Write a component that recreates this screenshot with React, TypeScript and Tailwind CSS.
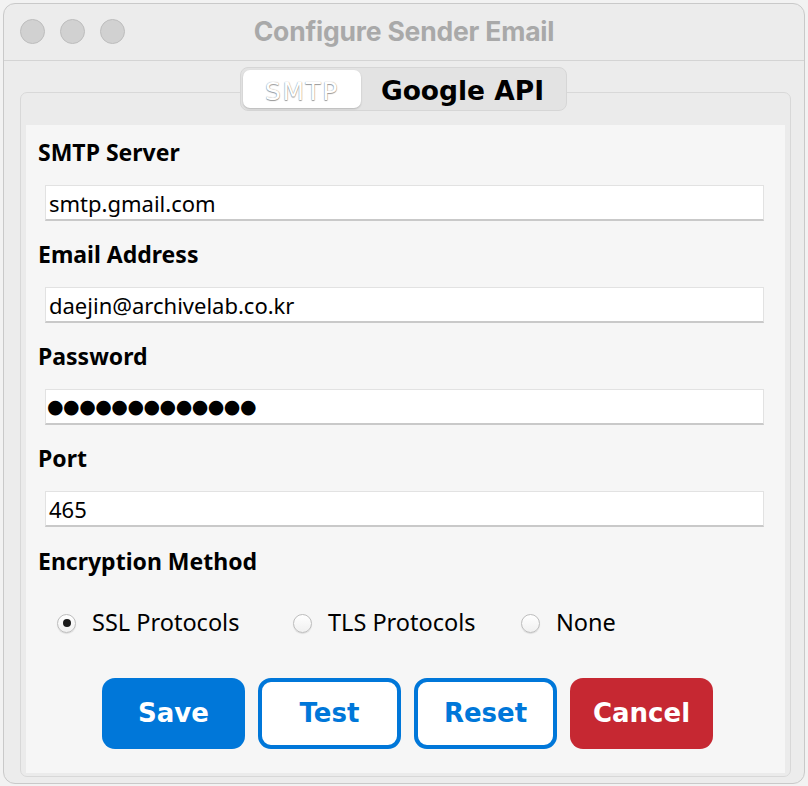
import React from "react";

const labelFont = { fontFamily: '"DejaVu Sans", Verdana, sans-serif' };
const noto = { fontFamily: '"Noto Sans", sans-serif' };

function Field({ label, value, password }: { label: string; value: string; password?: boolean }) {
  return (
    <div className="flex flex-col">
      <div className="h-[48px] pl-[12px] text-[23px] font-bold leading-[30px] text-black" style={noto}>
        {label}
      </div>
      <div className="ml-[19px] mr-[21px] h-[36px] bg-white border-t border-l border-r border-[#e2e2e2] border-b-2 border-b-[#c9c9c9] flex items-center pl-[1px]">
        {password ? (
          <span className="text-[19px] leading-none text-black tracking-[-0.5px]" style={{ fontFamily: '"DejaVu Sans", sans-serif' }}>
            ●●●●●●●●●●●●●
          </span>
        ) : (
          <span className="text-[22px] leading-none text-black pl-[2px]" style={noto}>
            {value}
          </span>
        )}
      </div>
      <div className="h-[18px]" />
    </div>
  );
}

function Radio({ label, checked }: { label: string; checked?: boolean }) {
  return (
    <div className="flex items-center gap-[16px]">
      <div className="w-[19px] h-[19px] rounded-full border border-[#bdbdbd] bg-gradient-to-b from-white to-[#f0f0f0] flex items-center justify-center shadow-[0_1px_1px_rgba(0,0,0,0.1)]">
        {checked && <div className="w-[8px] h-[8px] rounded-full bg-[#1a1a1a]" />}
      </div>
      <span className="text-[23.5px] leading-none text-black" style={noto}>
        {label}
      </span>
    </div>
  );
}

export default function App() {
  return (
    <div className="w-[808px] h-[786px] bg-[#f2f2f2] overflow-hidden pt-[3px] pl-[3px]">
      <div className="w-[802px] h-[781px] rounded-[12px] border border-[#c9c9c9] bg-[#ececec] flex flex-col overflow-hidden">
        {/* Title bar */}
        <div className="h-[57px] border-b border-[#d4d4d4] relative flex items-center justify-center shrink-0">
          <div className="absolute left-[16px] top-[15px] flex gap-[15px]">
            <div className="w-[25px] h-[25px] rounded-full bg-[#d1d1d1] border border-[#bdbdbd]" />
            <div className="w-[25px] h-[25px] rounded-full bg-[#d1d1d1] border border-[#bdbdbd]" />
            <div className="w-[25px] h-[25px] rounded-full bg-[#d1d1d1] border border-[#bdbdbd]" />
          </div>
          <span className="text-[26.5px] font-bold text-[#a9a9a9] tracking-[-0.2px]" style={{ fontFamily: 'Inter, "Noto Sans", sans-serif' }}>
            Configure Sender Email
          </span>
        </div>

        {/* Body */}
        <div className="flex flex-col flex-1 pt-[6px]">
          <div className="relative z-10 self-center ml-[-1px] flex items-center h-[44px] w-[327px] rounded-[8px] bg-[#e3e3e3] border border-[#d6d6d6] p-[2px] mb-[-19px]">
            <div className="w-[118px] h-[38px] rounded-[7px] bg-white shadow-[0_1px_2px_rgba(0,0,0,0.2)] flex items-center justify-center pt-[4px]">
              <span
                className="text-[25px] text-white leading-none tracking-[1.5px]"
                style={{ ...labelFont, textShadow: "0 0 1px #8a8a8a, 0 1px 1px #9a9a9a" }}
              >
                SMTP
              </span>
            </div>
            <div className="flex-1 flex items-center justify-center pt-[4px]">
              <span className="text-[26.5px] font-bold text-black leading-none" style={labelFont}>
                Google API
              </span>
            </div>
          </div>

          <div className="ml-[16px] w-[771px] h-[685px] rounded-[7px] border border-[#d8d8d8] bg-[#ebebeb] flex flex-col px-[5px] pb-[3px]">
            <div className="h-[32px] shrink-0" />
            <div className="flex-1 bg-[#f6f6f6] flex flex-col pt-[12px]">
              <Field label="SMTP Server" value="smtp.gmail.com" />
              <Field label="Email Address" value="daejin@archivelab.co.kr" />
              <Field label="Password" value="" password />
              <Field label="Port" value="465" />
              <div className="h-[30px] pl-[12px] mt-[1px] text-[23px] font-bold leading-[30px] text-black" style={noto}>
                Encryption Method
              </div>
              <div className="flex items-center pl-[31px] mt-[32px] h-[30px]">
                <div className="w-[236px]"><Radio label="SSL Protocols" checked /></div>
                <div className="w-[228px]"><Radio label="TLS Protocols" /></div>
                <Radio label="None" />
              </div>
              <div className="flex justify-center gap-[13px] mt-[40px] ml-[4px]">
                <button className="w-[143px] h-[71px] rounded-[13px] bg-[#0077d9] text-white text-[26px] font-bold" style={labelFont}>
                  Save
                </button>
                <button className="w-[143px] h-[71px] rounded-[13px] bg-white border-[4px] border-[#0077d9] text-[#0077d9] text-[26px] font-bold" style={labelFont}>
                  Test
                </button>
                <button className="w-[143px] h-[71px] rounded-[13px] bg-white border-[4px] border-[#0077d9] text-[#0077d9] text-[26px] font-bold" style={labelFont}>
                  Reset
                </button>
                <button className="w-[143px] h-[71px] rounded-[13px] bg-[#c62832] text-white text-[26px] font-bold" style={labelFont}>
                  Cancel
                </button>
              </div>
            </div>
          </div>
        </div>
      </div>
    </div>
  );
}
